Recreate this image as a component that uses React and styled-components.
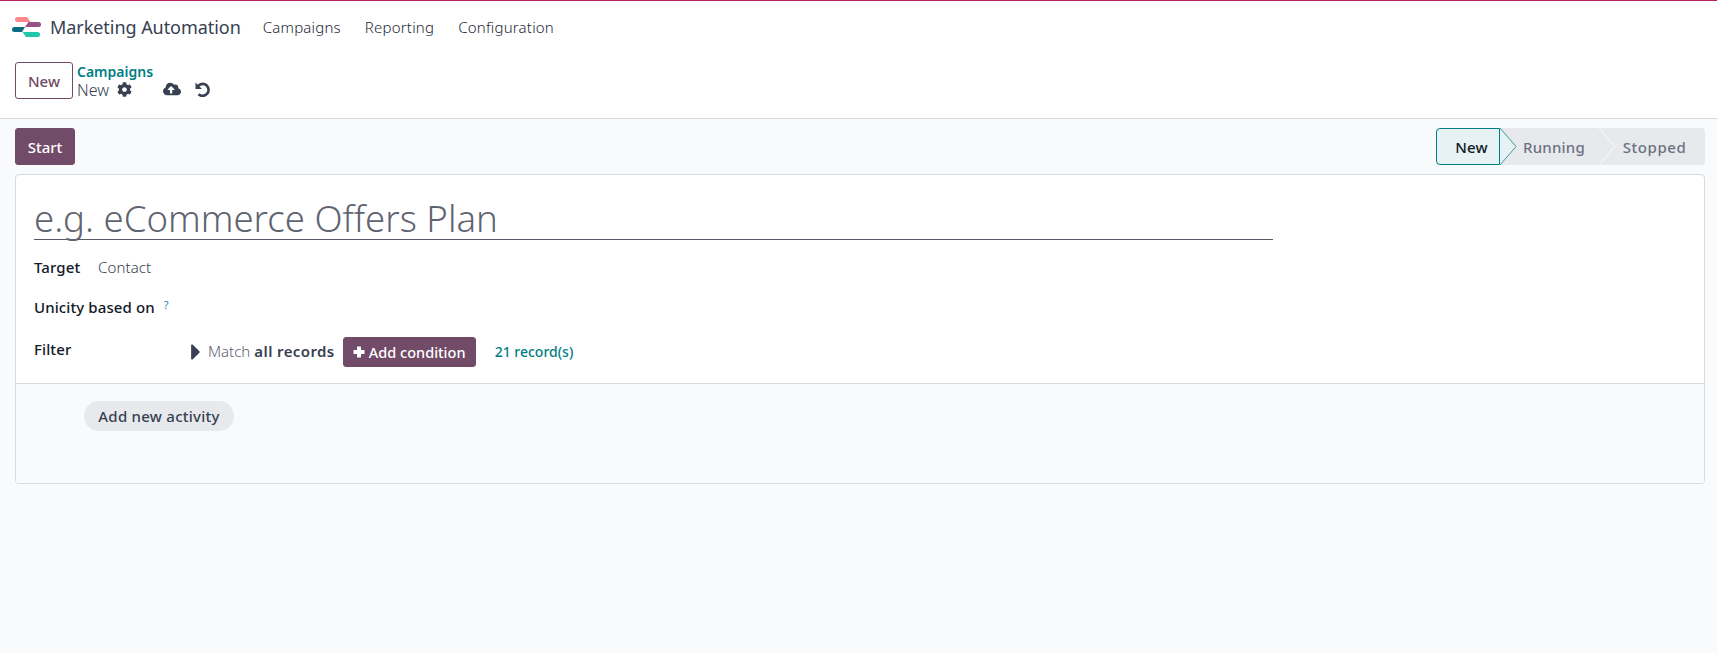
import React from "react";
import styled, { createGlobalStyle } from "styled-components";
import { FaCog, FaCloudUploadAlt, FaCaretRight } from "react-icons/fa";

const Global = createGlobalStyle`
  html, body { margin: 0; padding: 0; height: 100%; background: #f9fafb; }
  body { font-family: "Noto Sans", "Open Sans", sans-serif; font-size: 15px; color: #374151; }
  * { box-sizing: border-box; }
`;

const Page = styled.div`
  height: 653px;
  overflow: hidden;
  display: flex;
  flex-direction: column;
`;

const Navbar = styled.header`
  height: 46px;
  background: #fff;
  border-top: 1px solid #b5205f;
  display: flex;
  align-items: center;
  padding: 7px 0 0 12px;
`;

const Brand = styled.div`
  display: flex;
  align-items: center;
  gap: 8px;
  font-size: 18px;
  letter-spacing: -0.05px;
  color: #374151;
  margin-right: 10px;
`;

const MenuItem = styled.a`
  font-size: 15px;
  font-weight: 300;
  letter-spacing: 0.2px;
  color: #1f2937;
  padding: 0 12px;
`;

const ControlPanel = styled.div`
  height: 73px;
  background: #fff;
  border-bottom: 1px solid #d8dadd;
  display: flex;
  align-items: flex-start;
  padding: 16px 0 0 15px;
  gap: 4px;
`;

const NewButton = styled.button`
  width: 58px;
  height: 37px;
  background: #fff;
  border: 1px solid #714b67;
  border-radius: 3px;
  color: #714b67;
  font: 500 15px "Noto Sans", sans-serif;
`;

const Breadcrumb = styled.div`
  display: flex;
  flex-direction: column;
  line-height: 18px;
  margin-top: 1px;
`;

const CrumbLink = styled.a`
  color: #017e84;
  font-weight: 600;
  font-size: 14px;
`;

const CrumbRow = styled.div`
  display: flex;
  align-items: center;
  font-weight: 300;
  color: #374151;
  font-size: 16px;
`;

const CrumbIcon = styled.span`
  display: inline-flex;
  color: #374151;
  font-size: ${({ size }) => size}px;
  margin-left: ${({ gap }) => gap}px;
  margin-top: -2px;
`;

const Content = styled.main`
  padding: 9px 12px 0 15px;
`;

const ActionBar = styled.div`
  display: flex;
  justify-content: space-between;
  align-items: center;
  height: 37px;
  margin-bottom: 9px;
`;

const PrimaryButton = styled.button`
  background: #714b67;
  color: #fff;
  border: 1px solid #714b67;
  border-radius: 3px;
  font: 500 ${({ fontSize }) => fontSize}px "Noto Sans", sans-serif;
  display: inline-flex;
  align-items: center;
  justify-content: center;
  gap: 4px;
  width: ${({ width }) => width}px;
  height: ${({ height }) => height}px;
  padding: 0;
`;

const StatusBar = styled.div`
  display: flex;
  height: 37px;
  background: #e7e9ed;
  border-radius: 4px;
`;

const Stage = styled.div`
  position: relative;
  width: ${({ width }) => width}px;
  display: flex;
  align-items: center;
  justify-content: center;
  font-weight: 500;
  font-size: 15px;
  letter-spacing: ${({ spacing }) => spacing || 0.2}px;
  color: ${({ active }) => (active ? "#111827" : "#6b7280")};
  background: ${({ active }) => (active ? "#e6f2f3" : "transparent")};
  border: ${({ active }) => (active ? "1px solid #017e84" : "none")};
  border-radius: ${({ active }) => (active ? "4px 0 0 4px" : "0")};
  padding-left: ${({ pad }) => pad}px;
`;

const ChevronSvg = styled.svg`
  position: absolute;
  z-index: 1;
  top: ${({ active }) => (active ? "-1px" : "0")};
  left: ${({ active }) => (active ? "calc(100% + 1px)" : "100%")};
`;

function Chevron({ active }) {
  return (
    <ChevronSvg active={active} width="17" height="37" viewBox="0 0 17 37">
      <path
        d="M0 0L16 18.500L0 37"
        fill={active ? "#e6f2f3" : "#e7e9ed"}
        stroke={active ? "#3f9ba0" : "#f9fafb"}
        strokeWidth="1"
      />
    </ChevronSvg>
  );
}

const Card = styled.section`
  background: #fff;
  border: 1px solid #d8dadd;
  border-radius: 4px;
  height: 310px;
  display: flex;
  flex-direction: column;
  overflow: hidden;
`;

const Sheet = styled.div`
  padding: 16px 18px 0;
  height: 209px;
  border-bottom: 1px solid #d8dadd;
`;

const TitleInput = styled.div`
  width: 1239px;
  height: 49px;
  border-bottom: 1px solid #555b66;
  font-size: 36.6px;
  font-weight: 300;
  line-height: 54px;
  color: #5f6470;
  margin-bottom: 17px;
`;

const FieldRow = styled.div`
  display: flex;
  align-items: center;
  min-height: 19px;
  margin-bottom: ${({ after }) => after}px;
`;

const Label = styled.span`
  font-weight: 500;
  font-size: 15px;
  letter-spacing: 0.1px;
  color: #111827;
  width: ${({ width }) => width}px;
  align-self: ${({ top }) => (top ? "flex-start" : "center")};
  margin-top: ${({ top }) => (top ? "2px" : "0")};
`;

const Value = styled.span`
  font-weight: 300;
  letter-spacing: 0.1px;
  color: #374151;
`;

const Help = styled.sup`
  color: #1b8ea8;
  font-size: 11px;
  margin-left: 9px;
  position: relative;
  top: -3px;
`;

const Caret = styled(FaCaretRight)`
  width: 10px;
  height: 26px;
  color: #374151;
  margin-right: 7px;
`;

const Match = styled.span`
  display: flex;
  align-items: center;
  color: #5b6270;
  font-size: 15px;
  font-weight: 300;
  margin-right: 8px;
  padding-bottom: 3px;
  b { font-weight: 600; color: #374151; margin-left: 4px; letter-spacing: 0.4px; }
`;

const RecordsLink = styled.a`
  color: #017e84;
  font-weight: 500;
  font-size: 14px;
  margin-left: 19px;
  padding-bottom: 2px;
`;

const Activities = styled.div`
  flex: 1;
  background: #f9fafb;
  padding: 17px 0 0 68px;
`;

const Pill = styled.button`
  height: 30px;
  width: 150px;
  border: none;
  border-radius: 15px;
  background: #e7e9ed;
  color: #374151;
  font: 500 15px "Noto Sans", sans-serif;
  letter-spacing: 0.25px;
  padding: 0;
`;

function Logo() {
  return (
    <svg width="30" height="20" viewBox="0 0 30 20">
      <path d="M5.500 0H15l3.500 5H5.500a2.500 2.500 0 0 1 0-5z" fill="#fc868b" />
      <path d="M13 10l3.500-5H26.500a2.500 2.500 0 0 1 0 5z" fill="#985184" />
      <path d="M2.500 10H13l-3 5H2.500a2.500 2.500 0 0 1 0-5z" fill="#0e6a83" />
      <path d="M10.500 15H25.500a2.500 2.500 0 0 1 0 5H14z" fill="#21c7ab" />
    </svg>
  );
}

function PlusIcon() {
  return (
    <svg width="12" height="12" viewBox="0 0 12 12">
      <path d="M4 0.500h4v3.500h3.500v4H8v3.500H4V8H0.500V4H4z" fill="#fff" />
    </svg>
  );
}

function UndoIcon() {
  return (
    <svg width="15" height="15" viewBox="0 0 15 15">
      <path d="M0.500 0.500V7H7z" fill="#374151" />
      <path d="M3.200 3.800A6 6 0 1 1 3.500 12.300" fill="none" stroke="#374151" strokeWidth="2.600" />
    </svg>
  );
}

export default function App() {
  return (
    <Page>
      <Global />
      <Navbar>
        <Brand>
          <Logo />
          Marketing Automation
        </Brand>
        <MenuItem>Campaigns</MenuItem>
        <MenuItem>Reporting</MenuItem>
        <MenuItem>Configuration</MenuItem>
      </Navbar>
      <ControlPanel>
        <NewButton>New</NewButton>
        <Breadcrumb>
          <CrumbLink>Campaigns</CrumbLink>
          <CrumbRow>
            New
            <CrumbIcon size={15} gap={8}><FaCog /></CrumbIcon>
            <CrumbIcon size={18} gap={31}><FaCloudUploadAlt /></CrumbIcon>
            <CrumbIcon size={15} gap={14}><UndoIcon /></CrumbIcon>
          </CrumbRow>
        </Breadcrumb>
      </ControlPanel>
      <Content>
        <ActionBar>
          <PrimaryButton width={60} height={37} fontSize={15}>Start</PrimaryButton>
          <StatusBar>
            <Stage active width={64} pad={7}>New<Chevron active /></Stage>
            <Stage width={99} pad={9}>Running<Chevron /></Stage>
            <Stage width={106} pad={5} spacing={0.55}>Stopped</Stage>
          </StatusBar>
        </ActionBar>
        <Card>
          <Sheet>
            <TitleInput>e.g. eCommerce Offers Plan</TitleInput>
            <FieldRow after={20}>
              <Label width={64}>Target</Label>
              <Value>Contact</Value>
            </FieldRow>
            <FieldRow after={20}>
              <Label>Unicity based on</Label>
              <Help>?</Help>
            </FieldRow>
            <FieldRow>
              <Label width={157} top>Filter</Label>
              <Caret />
              <Match>
                Match <b>all records</b>
              </Match>
              <PrimaryButton width={133} height={30} fontSize={14.5}>
                <PlusIcon />
                Add condition
              </PrimaryButton>
              <RecordsLink>21 record(s)</RecordsLink>
            </FieldRow>
          </Sheet>
          <Activities>
            <Pill>Add new activity</Pill>
          </Activities>
        </Card>
      </Content>
    </Page>
  );
}
